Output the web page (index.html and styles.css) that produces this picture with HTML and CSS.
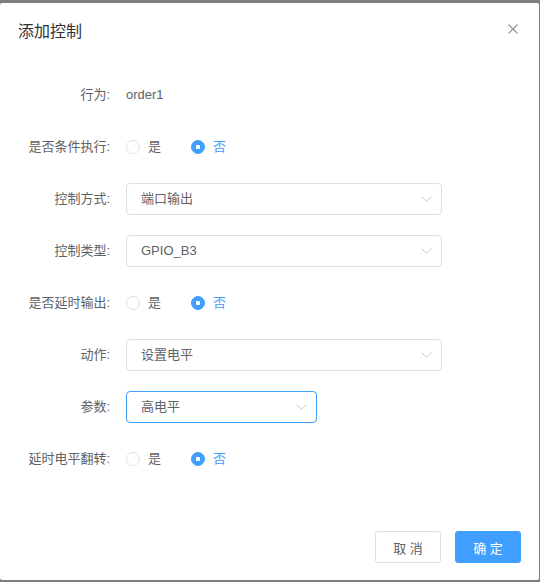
FILE: index.html
```html
<!DOCTYPE html>
<html>
<head>
    <title>添加控制</title>
    <link rel="stylesheet" href="styles.css">
</head>
<body>
    <div class="dialog">
        <div class="dialog-header">
            <span class="dialog-title">添加控制</span>
            <button class="dialog-close" aria-label="Close">
                <svg width="10" height="10" viewBox="0 0 10 10">
                    <path d="M0.5 0.5 L9.5 9.5 M9.5 0.5 L0.5 9.5" stroke="#909399" stroke-width="1.1" fill="none"/>
                </svg>
            </button>
        </div>

        <div class="dialog-body">
            <div class="form-item">
                <label class="form-label">行为:</label>
                <div class="form-content">order1</div>
            </div>

            <div class="form-item">
                <label class="form-label">是否条件执行:</label>
                <div class="form-content">
                    <span class="radio"><span class="radio-inner"></span>是</span>
                    <span class="radio checked"><span class="radio-inner"></span>否</span>
                </div>
            </div>

            <div class="form-item">
                <label class="form-label">控制方式:</label>
                <div class="form-content">
                    <div class="select">
                        <span>端口输出</span>
                        <svg class="arrow" width="11" height="6" viewBox="0 0 11 6"><path d="M0.5 0.5 L5.5 5.3 L10.5 0.5" stroke="#c0c4cc" fill="none"/></svg>
                    </div>
                </div>
            </div>

            <div class="form-item">
                <label class="form-label">控制类型:</label>
                <div class="form-content">
                    <div class="select">
                        <span>GPIO_B3</span>
                        <svg class="arrow" width="11" height="6" viewBox="0 0 11 6"><path d="M0.5 0.5 L5.5 5.3 L10.5 0.5" stroke="#c0c4cc" fill="none"/></svg>
                    </div>
                </div>
            </div>

            <div class="form-item">
                <label class="form-label">是否延时输出:</label>
                <div class="form-content">
                    <span class="radio"><span class="radio-inner"></span>是</span>
                    <span class="radio checked"><span class="radio-inner"></span>否</span>
                </div>
            </div>

            <div class="form-item">
                <label class="form-label">动作:</label>
                <div class="form-content">
                    <div class="select">
                        <span>设置电平</span>
                        <svg class="arrow" width="11" height="6" viewBox="0 0 11 6"><path d="M0.5 0.5 L5.5 5.3 L10.5 0.5" stroke="#c0c4cc" fill="none"/></svg>
                    </div>
                </div>
            </div>

            <div class="form-item">
                <label class="form-label">参数:</label>
                <div class="form-content">
                    <div class="select select-short focused">
                        <span>高电平</span>
                        <svg class="arrow" width="11" height="6" viewBox="0 0 11 6"><path d="M0.5 0.5 L5.5 5.3 L10.5 0.5" stroke="#c0c4cc" fill="none"/></svg>
                    </div>
                </div>
            </div>

            <div class="form-item">
                <label class="form-label">延时电平翻转:</label>
                <div class="form-content">
                    <span class="radio"><span class="radio-inner"></span>是</span>
                    <span class="radio checked"><span class="radio-inner"></span>否</span>
                </div>
            </div>
        </div>

        <div class="dialog-footer">
            <button class="btn">取 消</button>
            <button class="btn btn-primary">确 定</button>
        </div>
    </div>
</body>
</html>
```

FILE: styles.css
```css
body {
    margin: 0;
    background-color: #7f7f7f;
    font-family: "Liberation Sans", Arial, "Noto Sans CJK SC", sans-serif;
    font-size: 13px;
    color: #606266;
}
.dialog {
    margin: 3px 1px 0 0;
    height: 577px;
    box-sizing: border-box;
    background-color: #fff;
    border-radius: 2px;
    padding: 17px 18px 17px 0;
    display: flex;
    flex-direction: column;
}
.dialog-header {
    display: flex;
    justify-content: space-between;
    align-items: center;
    padding-left: 18px;
    height: 24px;
}
.dialog-title {
    font-size: 16px;
    line-height: 24px;
    color: #303133;
}
.dialog-close {
    border: none;
    background: none;
    padding: 0;
    margin: -6px 3px 0 0;
    width: 10px;
    height: 10px;
    display: flex;
    cursor: pointer;
}
.dialog-body {
    padding-top: 35px;
    display: flex;
    flex-direction: column;
    gap: 20px;
    flex-grow: 1;
}
.form-item {
    display: flex;
    height: 32px;
    align-items: center;
}
.form-label {
    width: 126px;
    box-sizing: border-box;
    padding-right: 16px;
    text-align: right;
    flex-shrink: 0;
    line-height: 32px;
}
.form-content {
    flex-grow: 1;
    display: flex;
    align-items: center;
    line-height: 32px;
}
.select {
    width: 316px;
    height: 32px;
    box-sizing: border-box;
    border: 1px solid #dcdfe6;
    border-radius: 4px;
    display: flex;
    align-items: center;
    justify-content: space-between;
    padding: 0 9px 0 14px;
    line-height: 30px;
}
.select-short {
    width: 191px;
}
.select.focused {
    border-color: #409eff;
}
.arrow {
    flex-shrink: 0;
}
.radio {
    display: inline-flex;
    align-items: center;
    gap: 8px;
    margin-right: 30px;
    cursor: pointer;
}
.radio-inner {
    width: 14px;
    height: 14px;
    box-sizing: border-box;
    border: 1px solid #dcdfe6;
    border-radius: 50%;
    background: #fff;
    display: flex;
    align-items: center;
    justify-content: center;
}
.radio.checked {
    color: #409eff;
}
.radio.checked .radio-inner {
    background-color: #409eff;
    border-color: #409eff;
}
.radio.checked .radio-inner::after {
    content: "";
    width: 4px;
    height: 4px;
    border-radius: 1px;
    background: #fff;
}
.dialog-footer {
    display: flex;
    justify-content: flex-end;
    gap: 14px;
}
.btn {
    width: 66px;
    height: 32px;
    padding: 0;
    border: 1px solid #dcdfe6;
    border-radius: 3px;
    background-color: #fff;
    color: #606266;
    font-family: inherit;
    font-size: 13px;
    cursor: pointer;
}
.btn-primary {
    background-color: #409eff;
    border-color: #409eff;
    color: #fff;
}
```
